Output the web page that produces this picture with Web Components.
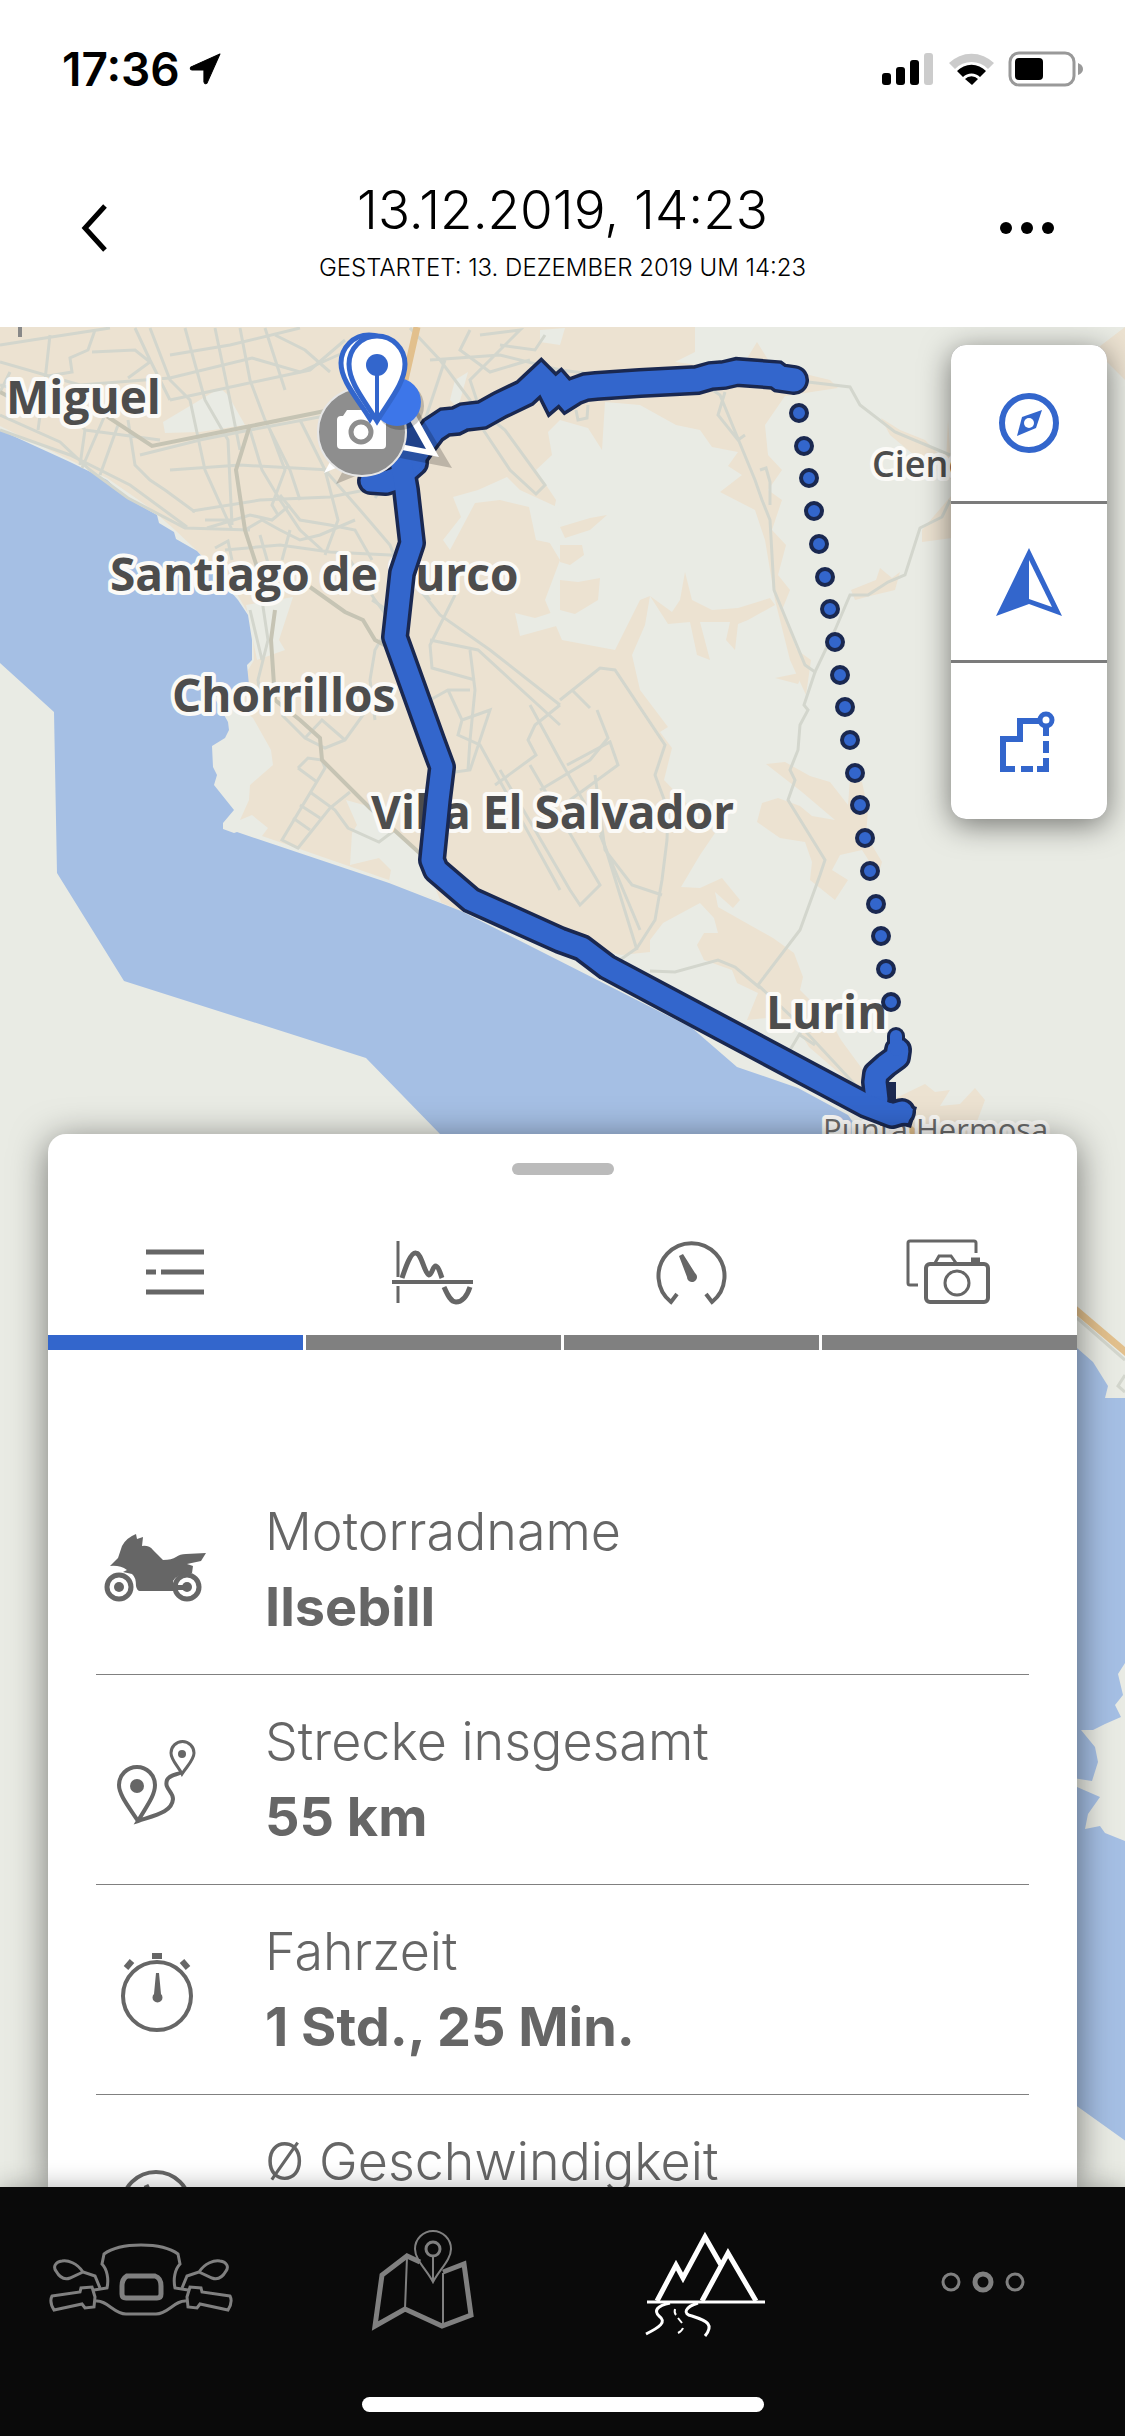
<!DOCTYPE html>
<html lang="de">
<head>
<meta charset="utf-8">
<meta name="viewport" content="width=device-width, initial-scale=1">
<title>13.12.2019, 14:23</title>
<style>
  :root {
    --blue: #3366cc;
    --navy: #1a2850;
    --grey: #666666;
    --bar: #0a0a0a;
  }
  html, body { height: 100%; }
  body {
    margin: 0;
    background: #fff;
    font-family: Inter, "Liberation Sans", sans-serif;
  }
</style>
</head>
<body>
<ride-app>
  <status-bar slot="top" time="17:36"></status-bar>
  <ride-header slot="top">
    13.12.2019, 14:23
    <span slot="sub">GESTARTET: 13. DEZEMBER 2019 UM 14:23</span>
  </ride-header>

  <ride-map slot="map"></ride-map>
  <map-tools slot="tools"></map-tools>

  <ride-sheet slot="sheet">
    <ride-fact icon="bike" label="Motorradname">Ilsebill</ride-fact>
    <ride-fact icon="distance" label="Strecke insgesamt">55 km</ride-fact>
    <ride-fact icon="stopwatch" label="Fahrzeit">1 Std., 25 Min.</ride-fact>
    <ride-fact icon="gauge" label="Ø Geschwindigkeit"></ride-fact>
  </ride-sheet>

  <tab-bar slot="bottom"></tab-bar>
</ride-app>

<script>
// small base: put markup + styles into an open shadow root
class RideElement extends HTMLElement {
  constructor() {
    super();
    this.attachShadow({ mode: "open" });
  }

  connectedCallback() {
    this.shadowRoot.innerHTML = this.render();
  }
}

const BUTTON_CSS = `
  button {
    appearance: none;
    border: 0;
    margin: 0;
    padding: 0;
    background: none;
    color: inherit;
    font: inherit;
    cursor: pointer;
    display: flex;
    align-items: center;
    justify-content: center;
  }
  svg { display: block; }
`;

// ride-app: page frame
class RideApp extends RideElement {
  render() {
    return `
      <style>
        :host {
          display: flex;
          flex-direction: column;
          height: 100vh;
        }
        main {
          flex: 1;
          min-height: 0;
          display: grid;
          grid-template-rows: minmax(0, 23fr) minmax(0, 30fr);
          grid-template-columns: minmax(0, 1fr);
          overflow: hidden;
        }
        slot[name="map"]::slotted(*) { grid-area: 1 / 1 / 3 / 2; }
        slot[name="tools"]::slotted(*) {
          grid-area: 1 / 1;
          justify-self: end;
          align-self: start;
          margin: 18px;
        }
        slot[name="sheet"]::slotted(*) {
          grid-area: 2 / 1;
          margin: 0 48px;
        }
      </style>
      <slot name="top"></slot>
      <main>
        <slot name="map"></slot>
        <slot name="tools"></slot>
        <slot name="sheet"></slot>
      </main>
      <slot name="bottom"></slot>
    `;
  }
}

// status-bar: clock, location arrow, signal, wifi, battery
class StatusBar extends RideElement {
  render() {
    return `
      <style>
        :host {
          display: flex;
          align-items: center;
          justify-content: space-between;
          height: 138px;
          padding: 0 42px 0 62px;
          color: #000;
        }
        div { display: flex; align-items: center; gap: 9px; }
        time { font-size: 46px; font-weight: 600; line-height: 54px; }
        svg { display: block; }
      </style>
      <div>
        <time>${this.getAttribute("time")}</time>
        <svg width="32" height="32" viewBox="0 0 30 30"><path d="M29 1 2 13q-2 2 1 3h11v11q1 3 3 1L29 1z" fill="currentColor" stroke="currentColor" stroke-linejoin="round"/></svg>
      </div>
      <div>
        <svg width="201" height="36" viewBox="0 0 201 36">
          <rect y="22" width="9" height="12" rx="3"/>
          <rect x="14" y="16" width="9" height="18" rx="3"/>
          <rect x="28" y="9" width="9" height="25" rx="3"/>
          <rect x="42" y="2" width="9" height="32" rx="3" fill="#ccc"/>
          <path d="M67 12a32 32 0 0 1 45 0l-6 6a23 23 0 0 0-33 0z" fill="#ccc"/>
          <path d="M75 20a20 20 0 0 1 29 0l-6 6a12 12 0 0 0-17 0z"/>
          <path d="M83 28a9 9 0 0 1 13 0l-6 6z"/>
          <rect x="128" y="2" width="64" height="32" rx="9" fill="none" stroke="#999" stroke-width="3"/>
          <rect x="133" y="7" width="28" height="22" rx="4"/>
          <path d="M196 12q5 2 5 6t-5 6z" fill="#999"/>
        </svg>
      </div>
    `;
  }
}

// ride-header: title bar with back and more
class RideHeader extends RideElement {
  render() {
    return `
      <style>${BUTTON_CSS}
        :host {
          display: flex;
          align-items: center;
          justify-content: space-between;
          box-sizing: border-box;
          height: 189px;
          padding: 0 38px 10px;
          color: #000;
        }
        button { width: 114px; height: 114px; }
        .text { text-align: center; padding-top: 6px; }
        h1 {
          margin: 0;
          font-size: 53px;
          font-weight: 300;
          line-height: 68px;
        }
        p {
          margin: 7px 0 0;
          font-size: 24px;
          font-weight: 300;
          line-height: 34px;
        }
      </style>
      <button type="button" aria-label="Zurück">
        <svg width="48" height="60" viewBox="0 0 48 60"><path d="M34 8 14 30l20 22" fill="none" stroke="#000" stroke-width="5"/></svg>
      </button>
      <div class="text">
        <h1><slot></slot></h1>
        <p><slot name="sub"></slot></p>
      </div>
      <button type="button" aria-label="Mehr">
        <svg width="60" height="24" viewBox="0 0 60 24"><circle cx="6" cy="12" r="6"/><circle cx="27" cy="12" r="6"/><circle cx="48" cy="12" r="6"/></svg>
      </button>
    `;
  }
}

// ride-map: coast, streets, the recorded track and its markers
class RideMap extends RideElement {
  // dotted part of the track (no gps fix)
  _dots() {
    let out = "";
    for (let i = 0; i < 19; i++) {
      const x = Math.round(799 + i * 5.1);
      const y = Math.round(413 + i * 32.7);
      out += `<circle cx="${x}" cy="${y}" r="8"/>`;
    }
    return out;
  }

  render() {
    const coast = "M0 430 70 462 107 480 125 497 157 515 159 523 174 532 176 539 197 551 210 565 225 585 238 600 248 615 252 640 252 660 247 665 249 685 232 692 214 697 228 722 229 730 225 738 212 746 213 767 217 775 214 785 234 810 223 823 223 829 234 833 237 832 389 883 461 911 692 1028 737 1067 798 1088 848 1115 880 1160 460 1160 440 1134 366 1058 124 981 57 873 54 712 0 663z";
    const start = "415 463 407 470 398 478 386 482 371 481";
    const track = "400 455 406 490 412 543 402 573 395 637 432 740 442 767 438 800 432 860 436 870 471 900 560 940 582 948 607 967 866 1105 892 1115 902 1112";
    const north = "410 462 424 442 433 430 445 422 456 421 464 417 482 415 500 405 525 393 541 378 549 386 553 394 560 388 567 396 575 391 586 387 596 386 640 383 697 380 711 376 724 375 737 372 776 375 780 378 794 380";
    const south = "877 1100 875 1082 876 1074 886 1065 897 1057 898 1050";
    return `
      <style>
        :host { display: block; overflow: hidden; background: #e9ebe4; }
        svg { display: block; width: 100%; height: 100%; }
        text {
          font-family: "Open Sans", "Noto Sans", sans-serif;
          font-weight: 700;
          font-size: 46px;
          fill: #4d4d4d;
          stroke: #fbfaf7;
          stroke-width: 8px;
          stroke-linejoin: round;
          paint-order: stroke;
        }
        text.town { font-size: 36px; font-weight: 600; }
        text.village { font-size: 31px; font-weight: 400; fill: #6a6a6a; }
        .urban { fill: #ece2d1; }
        .open { fill: #e9ebe4; }
        .water { fill: #a5bfe4; }
        .streets { fill: none; stroke: #d3d6cd; stroke-width: 3; }
        .major { fill: none; stroke: #c6c4b4; stroke-width: 4; }
        .casing, .line { fill: none; stroke-linejoin: round; stroke-linecap: round; }
        .casing { stroke: var(--navy); stroke-width: 28; }
        .line { stroke: var(--blue); stroke-width: 21; }
        .casing.rough { stroke-width: 30; stroke-linejoin: miter; }
        .line.rough { stroke-width: 23; stroke-linejoin: miter; }
        .dots { fill: var(--blue); stroke: var(--navy); stroke-width: 4; }
      </style>
      <svg viewBox="0 327 1125 1860" preserveAspectRatio="xMidYMin slice">
        <g class="urban">
          <path d="M0 320H695V352L675 362 740 370 757 342 772 366 830 380 838 388 785 396 765 425 768 455 782 470 768 490 782 500 772 530 786 545 778 575 790 590 782 610 797 650 811 660 806 695 790 660 775 600 765 540 755 510 720 492 742 475 728 466 738 452 712 447 700 430 676 425 640 405 605 402 602 450 588 428 560 420 548 432 552 455 536 470 556 500 548 540 560 560 545 600 562 640 615 650 640 600 650 596 645 625 632 655 640 690 668 727 660 732 672 748 664 780 715 833 700 855 681 887 700 888 722 878 740 900 733 908 715 892 718 907 773 938 794 953 803 977 800 990 830 1020 841 1040 863 1070 861 1092 809 1047 797 1028 776 1017 747 1020 758 993 737 983 732 970 704 960 697 945 704 933 718 933 714 918 700 903 663 923 650 940 650 952 621 955 560 940 461 911 389 880 262 836 268 828 252 815 240 820 249 800 250 785 273 765 271 750 253 718 230 700 254 660 252 620 230 582 175 530 150 508 107 478 0 426z"/>
          <path d="M650 596 672 612 680 600 685 572 692 600 712 610 738 608 770 598 775 605 748 620 738 624 735 650 726 640 730 622 700 622 710 660 697 655 690 622 668 624z"/>
          <path d="M560 527 590 518 607 515 590 530 565 538zM560 545 582 545 584 555 570 565 560 562zM560 580 578 582 600 578 598 600 575 614 560 610zM775 678 804 672 798 684z"/>
          <path d="M881 418 900 430 925 440 946 462 948 420 952 480 925 464 890 435zM922 530 952 495 952 538 922 542zM851 590 876 580 880 568 892 578 900 572 895 590 870 596 855 600z"/>
          <path d="M766 764 785 762 810 776 830 782 848 805 850 778 862 782 868 810 866 835 882 862 878 875 862 850 840 855 832 870 848 880 835 900 810 880 812 862 805 842 780 838 757 822 762 803 778 798 800 806 812 816 835 820 802 792z"/>
          <path d="M896 1098 925 1084 935 1092 950 1090 940 1106 960 1104 975 1088 985 1100 972 1135 905 1135zM1095 350 1125 327 1125 380z"/>
        </g>
        <g class="open">
          <path d="M163 422 220 388 228 395 245 425 200 432 165 433zM246 605 293 597 279 640 285 650 257 660 250 625zM346 800 371 807 421 853 441 902 389 881 391 870 379 858 350 865 352 833 357 825z"/>
          <path d="M453 497 478 490 507 477 520 490 557 507 560 545 536 540 529 507 500 500 475 503 450 550 443 540 461 517zM468 372 458 408 450 400 455 380zM515 613 535 618 560 610 560 625 520 636zM540 330 565 328 560 345 540 342z"/>
        </g>
        <path class="water" d="${coast}"/>
        <path class="water" d="M1060 1340 1077 1348 1093 1362 1108 1386 1105 1398H1130V1655L1118 1674 1123 1695 1115 1705 1121 1717 1105 1724 1093 1730 1081 1730 1095 1747 1098 1762 1092 1781 1060 1776zM1060 1785 1077 1787 1100 1797 1088 1814 1085 1829 1100 1826 1105 1833 1130 1843V2144L1060 2094z"/>

        <g class="streets">
          <path d="M0 345 45 338 110 328M0 362 80 385 170 378 252 358 300 372 345 352M50 335 45 380 38 430M95 330 88 350 70 358 72 372 48 376M92 352 135 350 150 362 128 378M135 328 150 360 170 400"/>
          <path d="M0 385 60 400 85 430 80 465M10 372 0 392M0 415 60 442 90 470 128 498 185 528 250 530M0 430 70 455 130 485 187 527M85 430 160 440M105 415 82 468M118 425 100 475M128 420 135 465 150 480 165 490 195 512"/>
          <path d="M150 328 170 380 190 400 205 470 232 530M185 328 205 400 228 440 232 525M215 328 230 400 240 450M240 328 250 380 265 420 290 470 300 500M265 328 285 390M275 335 305 350 330 372"/>
          <path d="M170 355 230 345 300 328M170 400 240 385 310 370 345 340M140 455 200 440 250 430 330 415M170 470 240 465 330 470M192 511 260 500 330 497 390 485M205 520H235M207 528 250 515 272 520 290 505"/>
          <path d="M250 430 262 470 280 500 300 530 322 550M270 430 285 470 272 505 278 515M280 495 300 520 330 525 355 530 372 560M300 420 325 470 338 520 325 555M325 470 360 510 390 545 400 570"/>
          <path d="M225 550 280 545 330 552 410 556M215 548 228 541 232 560M260 535 270 570 272 600M290 530 282 560M245 530 262 520 280 530 300 540 320 535 355 520M350 560 375 600 390 620M375 498 395 470"/>
          <path d="M410 328 440 360 470 400 480 430M430 360 500 355 560 370M445 360 425 420 400 430M470 330 460 350 490 372 530 360M480 335 520 330 500 350 470 380 480 410 505 430 545 485 536 494 510 470 480 425M500 345 535 350 545 335"/>
          <path d="M420 590 440 615 490 650 560 705M430 640 478 650 560 725M455 595 430 645 432 668 475 680M470 650 475 690 470 740 468 770M395 550 430 600M372 600 395 615 375 650 370 680 375 720"/>
          <path d="M262 600 268 640 258 680 262 710M250 610 262 660M282 715 305 738 325 748 345 740 368 708M305 738 322 720 345 740M298 768 308 758 322 760 325 768 282 840 298 848 330 808 350 792M298 768 317 782M310 792 335 810 348 828 379 842 395 830M300 805 320 818M293 818 310 830"/>
          <path d="M430 700 448 690 470 690M448 690 462 720 458 735 480 745 560 890M462 720 490 710 470 770 455 772M560 705 535 725 528 740 536 755 495 785M530 705 560 760 600 830 637 950M500 770 570 890 580 905 600 885 530 765M540 790 590 760 608 738 597 710"/>
          <path d="M560 700 600 668 615 670 665 745 655 775 668 810 667 840 662 880 655 920 637 948 610 967M572 690 590 708M567 765 610 742 618 765 570 800M595 775 605 850 632 885 662 895M600 835 640 930"/>
          <path d="M705 385 720 395 755 480 762 500 770 520 774 590 805 665 815 672 835 630 850 595 868 595 888 582 905 575 920 528 942 517 950 500M725 392 718 415 738 440 745 435M760 470 766 468 770 482 770 505"/>
          <path d="M808 382 850 387 860 405 895 432 950 455M815 672 804 705 808 710 800 725 798 750 790 770 795 780 788 800 825 860 820 875 800 930 758 985 795 1020 860 1090M650 971 675 972 718 960 735 967 760 988M802 1030 790 1050M800 1035 815 1045"/>
          <path d="M560 370 600 375M576 410 578 420 587 418 588 405M1077 1318 1125 1360M1125 1375 1118 1386 1125 1392"/>
        </g>
        <g class="major">
          <path d="M105 415 152 446 246 427 330 410M250 425 236 470 245 530 258 570M310 587 345 612 363 620 375 640 390 648M275 610 271 640 275 700 300 720 320 738 322 760 370 808 425 858M0 392 15 400"/>
        </g>
        <path d="M417 327 405 380M900 1120 918 1136M1070 1305 1128 1354" fill="none" stroke="#e2c08d" stroke-width="7"/>
        <path d="M20 327V337" stroke="#888" stroke-width="4"/>

        <text x="6" y="414">Miguel</text>
        <text x="110" y="591">Santiago de Surco</text>
        <text x="172" y="712">Chorrillos</text>
        <text x="371" y="829">Villa El Salvador</text>
        <text x="766" y="1029">Lurin</text>
        <text x="872" y="477" class="town">Cieneguilla</text>
        <text x="823" y="1141" class="village">Punta Hermosa</text>

        <polyline class="casing" points="${start}"/>
        <polyline class="casing rough" points="${north}"/>
        <polyline class="casing" points="${south}"/>
        <path d="M896 1036V1050" stroke="var(--navy)" stroke-width="18" stroke-linecap="round"/>
        <path d="M885 1082H896V1101L917 1107 911 1128 880 1120z" fill="var(--navy)"/>
        <polyline class="casing" points="${track}"/>
        <polyline class="line" points="${start}"/>
        <polyline class="line rough" points="${north}"/>
        <polyline class="line" points="${south}"/>
        <path d="M896 1036V1050" stroke="var(--blue)" stroke-width="12" stroke-linecap="round"/>
        <polyline class="line" points="${track}"/>
        <path d="M890 1103 913 1109 908 1123 890 1122z" fill="var(--blue)"/>
        <g class="dots">${this._dots()}</g>

        <!-- heading arrow -->
        <path d="M395 372 452 468 400 458 336 484z" fill="#000" opacity=".2"/>
        <path d="M385 360 439 457 386 447 324 473z" fill="#fff"/>
        <path d="M390 385 426 449 390 442z" fill="#1f4189"/>

        <!-- photo -->
        <circle cx="362" cy="432" r="44" fill="#8e8e8e" stroke="#e6e6e6" stroke-width="2"/>
        <path d="M341 416h2l4-6h24l5 6h6q4 0 4 4v25q0 4-4 4h-41q-4 0-4-4v-25q0-4 4-4z" fill="#fff"/>
        <circle cx="361" cy="432" r="10" fill="#fff" stroke="#8e8e8e" stroke-width="5"/>

        <circle cx="400" cy="406" r="24" fill="#000" opacity=".2"/>
        <circle cx="397" cy="402" r="24" fill="#3d76e9"/>

        <!-- start and end pins -->
        <g fill="#fff" stroke="var(--blue)" stroke-width="5">
          <path d="M370 419C358 399 341 381 341 363a28 28 0 0 1 56 0C397 381 382 399 370 419z"/>
          <path d="M377 421C365 401 349 383 349 364a28 28 0 0 1 56 0C405 383 389 401 377 421z"/>
          <path d="M377 366V420" stroke-width="4"/>
        </g>
        <circle cx="377" cy="365" r="11" fill="var(--blue)"/>
      </svg>
    `;
  }
}

// map-tools: floating button column
class MapTools extends RideElement {
  render() {
    return `
      <style>${BUTTON_CSS}
        :host {
          display: flex;
          flex-direction: column;
          gap: 3px;
          border-radius: 15px;
          overflow: hidden;
          background: #7b7b7b;
          box-shadow: 0 6px 30px rgba(0, 0, 0, 0.5);
          color: var(--blue);
        }
        button { width: 156px; height: 156px; background: #fff; }
      </style>
      <button type="button" aria-label="Kompass">
        <svg width="72" height="72" viewBox="0 0 72 72">
          <circle cx="36" cy="36" r="27" fill="none" stroke="currentColor" stroke-width="6"/>
          <path d="M49 23 43 41 24 49 29 30z" fill="currentColor"/>
          <circle cx="36" cy="36" r="5" fill="#fff"/>
        </svg>
      </button>
      <button type="button" aria-label="Norden">
        <svg width="72" height="72" viewBox="0 0 72 72">
          <path d="M36 2 69 70 36 58 3 70z" fill="currentColor"/>
          <path d="M36 14V53L59 61z" fill="#fff"/>
        </svg>
      </button>
      <button type="button" aria-label="Route">
        <svg width="72" height="72" viewBox="0 0 72 72" fill="none" stroke="currentColor" stroke-width="6">
          <path d="M47 16H27V34H10V64H22M28 64H40M44 64H53V53M53 48V36M53 31V22"/>
          <circle cx="53" cy="15" r="6" fill="#fff" stroke-width="5"/>
        </svg>
      </button>
    `;
  }
}

// ride-sheet: bottom sheet with four tabs and the list of facts
class RideSheet extends RideElement {
  render() {
    return `
      <style>${BUTTON_CSS}
        :host {
          display: flex;
          flex-direction: column;
          min-height: 0;
          overflow: hidden;
          border-radius: 18px 18px 0 0;
          background: #fff;
          box-shadow: 0 6px 36px rgba(0, 0, 0, 0.5);
          color: var(--grey);
        }
        .handle {
          flex: none;
          align-self: center;
          width: 102px;
          height: 12px;
          margin: 29px 0 33px;
          border-radius: 6px;
          background: #bbb;
        }
        .tabs { flex: none; display: flex; gap: 3px; }
        .tabs button {
          flex: 1;
          height: 142px;
          border-bottom: 15px solid #808080;
        }
        .tabs button[aria-selected="true"] { border-color: var(--blue); }
        .facts {
          display: flex;
          flex-direction: column;
          padding: 115px 48px 0;
        }
        svg { fill: none; stroke: currentColor; }
      </style>
      <div class="handle"></div>
      <div class="tabs" role="tablist">
        <button type="button" role="tab" aria-selected="true" aria-label="Übersicht">
          <svg width="90" height="72" viewBox="0 0 90 72" stroke-width="5"><path d="M15 16H73M15 36H25M30 36H73M15 56H73"/></svg>
        </button>
        <button type="button" role="tab" aria-selected="false" aria-label="Höhenprofil">
          <svg width="90" height="72" viewBox="0 0 90 72" stroke-width="4">
            <path d="M9 5V41M9 50V67" stroke-width="3"/>
            <path d="M3 46H84"/>
            <path d="M13 42C17 30 22 16 27 17 33 18 35 37 40 39 43 39 44 29 47 30 50 31 51 37 53 42M55 51C59 60 62 66 67 66 73 66 78 60 81 51" stroke-width="5"/>
          </svg>
        </button>
        <button type="button" role="tab" aria-selected="false" aria-label="Geschwindigkeit">
          <svg width="90" height="72" viewBox="0 0 90 72" stroke-width="5">
            <path d="M30 58 24 66A33 33 0 1 1 65 66L59 58" stroke-width="4"/>
            <path d="M32 20 36 18 48 37A5 5 0 1 1 40 41z" fill="currentColor" stroke="none"/>
          </svg>
        </button>
        <button type="button" role="tab" aria-selected="false" aria-label="Fotos">
          <svg width="90" height="72" viewBox="0 0 90 72" stroke-width="3">
            <path d="M13 49H5Q3 49 3 47V7Q3 5 5 5H69Q71 5 71 7V17"/>
            <rect x="21" y="28" width="62" height="38" rx="4" stroke-width="4"/>
            <path d="M30 27 34 20H46L51 27"/>
            <path d="M66 24H75" stroke-width="5"/>
            <circle cx="52" cy="47" r="12"/>
          </svg>
        </button>
      </div>
      <div class="facts"><slot></slot></div>
    `;
  }
}

const FACT_ICONS = {
  bike: `
    <path d="M14 57 22 49 26 37Q30 29 40 25L41 30 47 28 46 37Q53 36 57 41L67 51Q76 51 80 48 84 45 90 45L110 44 105 52 91 55 97 57 96 64Q82 64 77 72L79 82H44Q41 82 40 77 40 68 36 65L27 63 31 61Q24 56 14 57z" fill="currentColor" stroke="none"/>
    <circle cx="23" cy="78" r="12" stroke-width="5" fill="#fff"/>
    <circle cx="91" cy="78" r="12" stroke-width="5" fill="#fff"/>
    <circle cx="23" cy="78" r="5" fill="currentColor" stroke="none"/>
    <path d="M80 76H91V81H80z" fill="currentColor" stroke="none"/>
    <circle cx="91" cy="78" r="5" fill="currentColor" stroke="none"/>`,
  distance: `
    <path d="M42 102C33 88 23 76 23 66a18 18 0 0 1 36 0C59 77 50 88 42 102 60 96 76 93 77 80 77 72 68 70 71 61 74 55 82 56 86 53"/>
    <path d="M86 55C82 47 75 41 75 34a11 11 0 0 1 23 0C98 41 91 47 86 55z" stroke-width="3"/>
    <circle cx="41" cy="67" r="7" fill="currentColor" stroke="none"/>
    <circle cx="86" cy="35" r="4" fill="currentColor" stroke="none"/>`,
  stopwatch: `
    <circle cx="61" cy="67" r="34"/>
    <path d="M56 27H66M30 39 36 32M86 32 92 39" stroke-width="6"/>
    <path d="M60 44H63L65 65A5 5 0 1 1 58 65z" fill="currentColor" stroke="none"/>`,
  gauge: `
    <circle cx="60" cy="67" r="34"/>
    <path d="M50 46 60 67" stroke-width="5"/>`,
};

// ride-fact: icon, label and value (the slot)
class RideFact extends RideElement {
  render() {
    return `
      <style>
        :host {
          display: flex;
          align-items: center;
          gap: 49px;
          padding: 29px 0 30px;
          border-bottom: 1px solid #808080;
          font-size: 52px;
          line-height: 75px;
        }
        svg {
          display: block;
          flex: none;
          fill: none;
          stroke: currentColor;
          stroke-width: 4;
        }
        dl { margin: 0; min-height: 150px; }
        dt { font-weight: 300; }
        dd { margin: 0; font-size: 54px; font-weight: 700; }
      </style>
      <svg width="120" height="120" viewBox="0 0 120 120">${FACT_ICONS[this.getAttribute("icon")]}</svg>
      <dl>
        <dt>${this.getAttribute("label")}</dt>
        <dd><slot></slot></dd>
      </dl>
    `;
  }
}

// tab-bar: app navigation + home indicator
class TabBar extends RideElement {
  render() {
    // left half of the cockpit, drawn twice
    const halfBike = `
      <path d="M100 18C85 18 71 21 63 27L61 37C66 42 68 52 66 61L53 63"/>
      <path d="M11 69 39 65 40 61 51 60 54 70 53 80 44 81 41 77 13 83Q8 75 11 69z"/>
      <path d="M59 61 54 49 42 45C36 36 27 33 21 34 14 35 12 40 15 44 19 51 24 53 29 51L42 45"/>
      <path d="M55 74C66 73 73 87 85 87H100"/>`;
    return `
      <style>${BUTTON_CSS}
        :host {
          position: relative;
          display: flex;
          flex-direction: column;
          align-items: center;
          height: 249px;
          background: var(--bar);
          box-shadow: 0 0 24px rgba(0, 0, 0, 0.3);
          color: #808080;
        }
        nav { display: flex; width: 100%; padding: 40px 0 50px; }
        nav button { flex: 1; }
        nav button[aria-current] { color: #fff; }
        .home {
          width: 402px;
          height: 15px;
          border-radius: 8px;
          background: #fff;
        }
        svg { fill: none; stroke: currentColor; stroke-width: 3; }
      </style>
      <nav>
        <button type="button" aria-label="Motorrad">
          <svg width="200" height="120" viewBox="0 0 200 120">
            <g>${halfBike}</g>
            <g transform="translate(200 0) scale(-1 1)">${halfBike}</g>
            <path d="M86 49H114Q120 51 120 59V67Q120 71 116 71H85Q81 71 81 67V59Q81 52 86 49z" stroke-width="5"/>
          </svg>
        </button>
        <button type="button" aria-label="Karte">
          <svg width="200" height="120" viewBox="0 0 200 120">
            <path d="M98 35 85 29 60 48 53 99 83 82 120 99 149 88 142 37 121 45" stroke-width="5"/>
            <path d="M85 30 83 82M121 46V98" stroke-width="2"/>
            <path d="M111 55C105 43 93 33 93 22a18 18 0 0 1 36 0C129 33 117 43 111 55z" stroke-width="2"/>
            <circle cx="111" cy="22" r="7"/>
            <path d="M111 30V54" stroke-width="2"/>
          </svg>
        </button>
        <button type="button" aria-label="Fahrten" aria-current="page">
          <svg width="200" height="120" viewBox="0 0 200 120">
            <path d="M44 75H162"/>
            <path d="M54 74 73 38 80 51 102 10 118 38M99 74 125 26 153 74" stroke-width="5"/>
            <path d="M67 76C53 79 51 84 56 89 64 95 57 100 43 107M95 76C82 80 79 87 89 89 105 94 111 98 102 109"/>
            <path d="M72 82Q71 86 73 88M75 91 79 96M80 101Q79 104 75 106" stroke-width="2"/>
          </svg>
        </button>
        <button type="button" aria-label="Mehr">
          <svg width="200" height="120" viewBox="0 0 200 120">
            <circle cx="67" cy="55" r="8"/>
            <circle cx="99" cy="55" r="8" stroke-width="5"/>
            <circle cx="131" cy="55" r="8"/>
          </svg>
        </button>
      </nav>
      <div class="home"></div>
    `;
  }
}

customElements.define("ride-app", RideApp);
customElements.define("status-bar", StatusBar);
customElements.define("ride-header", RideHeader);
customElements.define("ride-map", RideMap);
customElements.define("map-tools", MapTools);
customElements.define("ride-sheet", RideSheet);
customElements.define("ride-fact", RideFact);
customElements.define("tab-bar", TabBar);
</script>
</body>
</html>
